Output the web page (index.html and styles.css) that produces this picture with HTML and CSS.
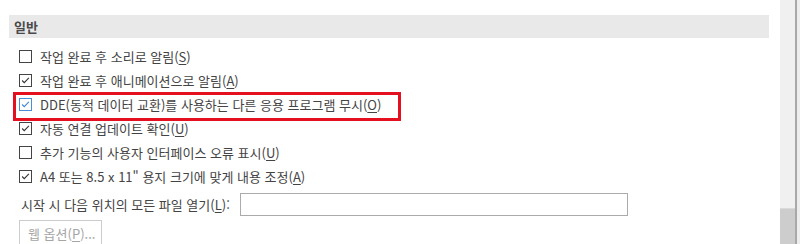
FILE: index.html
```html
<!DOCTYPE html>
<html lang="ko">
<head>
<meta charset="utf-8">
<link rel="stylesheet" href="styles.css">
</head>
<body>
<div class="page">
  <main class="main">
    <div class="section-head">일반</div>
    <ul class="options">
      <li class="row"><span class="cb"></span><span>작업 완료 후 소리로 알림(<u>S</u>)</span></li>
      <li class="row"><span class="cb checked"><svg viewBox="0 0 13 13"><path d="M2.5 6.5 L5 9 L10.5 3.5" /></svg></span><span>작업 완료 후 애니메이션으로 알림(<u>A</u>)</span></li>
      <li class="row highlighted"><span class="cb checked focus"><svg viewBox="0 0 13 13"><path d="M2.5 6.5 L5 9 L10.5 3.5" /></svg></span><span>DDE(동적 데이터 교환)를 사용하는 다른 응용 프로그램 무시(<u>O</u>)</span></li>
      <li class="row"><span class="cb checked"><svg viewBox="0 0 13 13"><path d="M2.5 6.5 L5 9 L10.5 3.5" /></svg></span><span>자동 연결 업데이트 확인(<u>U</u>)</span></li>
      <li class="row"><span class="cb"></span><span>추가 기능의 사용자 인터페이스 오류 표시(<u>U</u>)</span></li>
      <li class="row"><span class="cb checked"><svg viewBox="0 0 13 13"><path d="M2.5 6.5 L5 9 L10.5 3.5" /></svg></span><span>A4 또는 8.5 x 11" 용지 크기에 맞게 내용 조정(<u>A</u>)</span></li>
    </ul>
    <div class="open-row">
      <label class="open-label">시작 시 다음 위치의 모든 파일 열기(<u>L</u>):</label>
      <span class="textbox"></span>
    </div>
    <button class="web-btn" disabled>웹 옵션(<u>P</u>)...</button>
  </main>
  <div class="scrollbar"><div class="thumb"></div></div>
</div>
</body>
</html>
```
FILE: styles.css
```css
html, body {
  margin: 0;
  padding: 0;
  background: #ffffff;
}
body {
  font-family: "Noto Sans CJK KR", "Noto Sans", sans-serif;
  font-size: 13px;
  color: #444444;
  width: 800px;
  height: 244px;
  overflow: hidden;
}
.page {
  display: flex;
  height: 244px;
}
.main {
  flex: 1;
  padding: 15px 11px 0 9px;
  position: relative;
}
.section-head {
  height: 23px;
  line-height: 23px;
  background: #e9e9e9;
  padding-left: 5px;
  font-weight: 700;
  color: #4a4a4a;
}
.options {
  list-style: none;
  margin: 6px 0 0 0;
  padding: 0 0 0 10px;
}
.row {
  height: 24px;
  display: flex;
  align-items: center;
  gap: 8px;
  white-space: nowrap;
}
.row u, .open-label u, .web-btn u {
  text-decoration-thickness: 1px;
  text-underline-offset: 2px;
}
.cb {
  width: 13px;
  height: 13px;
  box-sizing: border-box;
  border: 1px solid #444444;
  background: #ffffff;
  display: inline-flex;
  flex: none;
}
.cb svg {
  width: 11px;
  height: 11px;
}
.cb path {
  fill: none;
  stroke: #333333;
  stroke-width: 1.3;
}
.cb.focus {
  border-color: #4a8fd6;
}
.cb.focus path {
  stroke: #3b86d6;
}
.highlighted {
  position: relative;
}
.highlighted::after {
  content: "";
  position: absolute;
  left: -6px;
  top: 0;
  width: 382px;
  height: 23px;
  border: 3px solid #e5101f;
  pointer-events: none;
}
.open-row {
  display: flex;
  align-items: center;
  margin-top: 5px;
  padding-left: 12px;
  height: 23px;
}
.open-label {
  width: 219px;
  flex: none;
  white-space: nowrap;
}
.textbox {
  width: 388px;
  height: 23px;
  box-sizing: border-box;
  border: 1px solid #ababab;
  background: #ffffff;
}
.web-btn {
  display: block;
  margin: 4px 0 0 10px;
  width: 83px;
  height: 26px;
  box-sizing: border-box;
  border: 1px solid #cccccc;
  background: #ffffff;
  font-family: inherit;
  font-size: 13px;
  color: #a6a6a6;
  text-align: left;
  padding: 0 0 0 8px;
}
.scrollbar {
  width: 15px;
  height: 244px;
  background: #f0f0f0;
  border-right: 2px solid #a8a8a8;
  margin-right: 3px;
  position: relative;
  box-shadow: 3px 0 0 #ededed;
}
.thumb {
  position: absolute;
  left: 0;
  right: 0;
  top: 208px;
  bottom: 0;
  background: #cdcdcd;
  border-top: 1px solid #dadada;
}
```
